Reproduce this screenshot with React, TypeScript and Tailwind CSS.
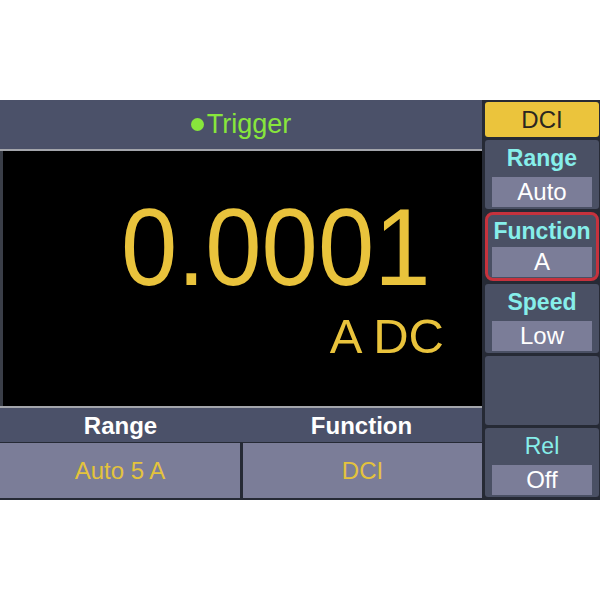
const FONT = { fontFamily: '"Liberation Sans", Arial, sans-serif' };

type SoftKeyProps = {
  label?: string;
  value?: string;
  bold?: boolean;
  selected?: boolean;
};

const SoftKey = ({ label, value, bold = true, selected = false }: SoftKeyProps) => (
  <div
    className={
      selected
        ? 'h-[69px] flex flex-col rounded-[8px] border-[3px] border-[#c6323d] bg-[#4a5064] px-[4px] pb-[1px]'
        : 'h-[69px] flex flex-col rounded-[3px] bg-[#4a5064] px-[7px] pb-[2px]'
    }
  >
    {label && (
      <>
        <div
          className={`flex-1 flex items-center justify-center text-[23px] leading-none text-[#86eeea] ${
            bold ? 'font-bold' : 'font-normal'
          }`}
        >
          {label}
        </div>
        <div className="h-[30px] flex items-center justify-center bg-[#7b7d98] text-[24px] leading-none text-white">
          {value}
        </div>
      </>
    )}
  </div>
);

export default function App() {
  return (
    <div className="w-[600px] h-[600px] bg-white flex flex-col" style={FONT}>
      <div className="h-[100px]" />
      <div className="h-[400px] flex bg-[#262a35]">
        {/* Left: reading panel */}
        <div className="w-[482px] flex flex-col">
          <div className="h-[49px] flex items-center justify-center gap-[3px] bg-[#4b5169] text-[27px] text-[#88e63c]">
            <span className="w-[13px] h-[13px] rounded-full bg-[#88e63c]" />
            <span>Trigger</span>
          </div>
          <div className="h-[2px] bg-[#a3a5ab]" />
          <div className="h-[255px] bg-black border-l-[3px] border-[#3a3e48] flex flex-col items-end pr-[38px] text-[#e9c33c]">
            <div className="mt-[41px] mr-[14px] text-[110px] leading-none origin-right scale-x-[0.92]">
              0.0001
            </div>
            <div className="mt-[10px] text-[49px] leading-none">A DC</div>
          </div>
          <div className="h-[2px] bg-[#a3a5ab]" />
          <div className="h-[34px] grid grid-cols-2 bg-[#4b5169] text-[24px] font-bold text-white">
            <div className="flex items-center justify-center">Range</div>
            <div className="flex items-center justify-center">Function</div>
          </div>
          <div className="h-[56px] flex gap-[3px] pt-[1px] text-[24px] text-[#e4c33c]">
            <div className="w-[240px] flex items-center justify-center bg-[#7b7d98]">Auto 5 A</div>
            <div className="flex-1 flex items-center justify-center bg-[#7b7d98]">DCI</div>
          </div>
          <div className="h-[2px]" />
        </div>

        {/* Right: softkeys */}
        <div className="flex-1 flex flex-col gap-[3px] pl-[3px] pr-[1px] pt-[2px]">
          <div className="h-[35px] flex items-center justify-center rounded-[3px] bg-[#ebc43c] text-[24px] text-[#2a2620]">
            DCI
          </div>
          <SoftKey label="Range" value="Auto" />
          <SoftKey label="Function" value="A" selected />
          <SoftKey label="Speed" value="Low" />
          <SoftKey />
          <SoftKey label="Rel" value="Off" bold={false} />
        </div>
      </div>
      <div className="flex-1" />
    </div>
  );
}
